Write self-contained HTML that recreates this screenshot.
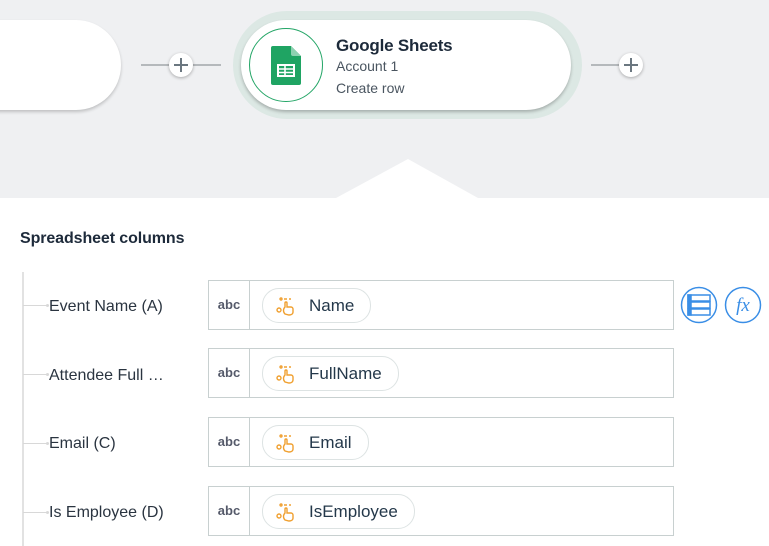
<!DOCTYPE html><html><head><style>
body{margin:0;width:769px;height:546px;overflow:hidden;background:#fff;font-family:"Liberation Sans",Arial,sans-serif;position:relative}
.a{position:absolute}
.plus{position:absolute;width:24px;height:24px;border-radius:50%;background:#fff;box-shadow:0 1px 3px rgba(0,0,0,.3)}
.plus:before{content:"";position:absolute;left:5px;top:11px;width:14px;height:1.5px;background:#6b7780}
.plus:after{content:"";position:absolute;left:11px;top:5px;width:1.5px;height:14px;background:#6b7780}
.row{position:absolute;left:208px;width:464px;height:48px;border:1px solid #c8d0d0;background:#fff}
.abc{position:absolute;left:0;top:0;width:40px;height:48px;border-right:1px solid #c8d0d0;color:#555a6a;font-weight:bold;font-size:13px;line-height:48px;text-align:center}
.chip{position:absolute;left:53px;top:7px;height:33px;border:1px solid #dde3e3;border-radius:17px;font-size:17px;color:#24384a;line-height:33px;padding:0 16px 0 46px}
.chip svg{position:absolute;left:13px;top:7px}
.lbl{position:absolute;left:49px;font-size:16px;color:#2a3440}
.br{position:absolute;left:23px;width:24px;height:1px;background:#d8d8d8}
.br:after{content:"";position:absolute;right:-2px;top:-1px;width:3px;height:3px;border-radius:50%;background:#d8d8d8}
</style></head><body>
<div class="a" style="left:0;top:0;width:769px;height:198px;background:#eff0f2"></div>
<div class="a" style="left:336px;top:159px;width:0;height:0;border-left:72px solid transparent;border-right:70px solid transparent;border-bottom:39px solid #fff"></div>
<div class="a" style="left:-60px;top:20px;width:181px;height:90px;border-radius:45px;background:#fff;box-shadow:0 2px 3px rgba(0,0,0,.2)"></div>
<div class="a" style="left:141px;top:64px;width:80px;height:2px;background:#b5b9bc"></div>
<div class="plus" style="left:169px;top:53px"></div>
<div class="a" style="left:233px;top:11px;width:349px;height:108px;border-radius:54px;background:#dce8e4"></div>
<div class="a" style="left:241px;top:20px;width:330px;height:90px;border-radius:45px;background:#fff;box-shadow:0 2px 3px rgba(0,0,0,.25)"></div>
<div class="a" style="left:249px;top:28px;width:72px;height:72px;border-radius:50%;border:1px solid #23a566"></div>
<svg class="a" style="left:271px;top:46px" width="30" height="39" viewBox="0 0 30 39"><path d="M2 0H20L30 10V37a2 2 0 0 1-2 2H2a2 2 0 0 1-2-2V2a2 2 0 0 1 2-2z" fill="#1fa463"/><path d="M20 0L30 10H22a2 2 0 0 1-2-2z" fill="#8ed1b1"/><rect x="7" y="19" width="16" height="11" fill="none" stroke="#fff" stroke-width="2"/><path d="M7 23H23M7 26.5H23M14 19V30" stroke="#fff" stroke-width="1.6"/></svg>
<div class="a" style="left:336px;top:36px;font-size:17px;font-weight:bold;color:#1d2a3a;letter-spacing:-.2px">Google Sheets</div>
<div class="a" style="left:336px;top:58px;font-size:14px;color:#4a5560">Account 1</div>
<div class="a" style="left:336px;top:80px;font-size:14px;color:#4a5560">Create row</div>
<div class="a" style="left:591px;top:64px;width:30px;height:2px;background:#b5b9bc"></div>
<div class="plus" style="left:619px;top:53px"></div>
<div class="a" style="left:20px;top:230px;font-size:16px;font-weight:bold;color:#1d2a3a;letter-spacing:-.1px">Spreadsheet columns</div>
<div class="a" style="left:22px;top:272px;width:2px;height:274px;background:#e2e2e2"></div>
<div class="br" style="top:305px"></div><div class="lbl" style="top:298px">Event Name (A)</div>
<div class="br" style="top:374px"></div><div class="lbl" style="top:367px">Attendee Full …</div>
<div class="br" style="top:443px"></div><div class="lbl" style="top:435px">Email (C)</div>
<div class="br" style="top:512px"></div><div class="lbl" style="top:504px">Is Employee (D)</div>
<div class="row" style="top:280px"><div class="abc">abc</div><div class="chip"><svg width="20" height="20" viewBox="0 0 20 20" fill="none" stroke="#f0a030" stroke-width="1.4"><circle cx="3" cy="14" r="2"/><circle cx="5" cy="3" r="1"/><path d="M8 3h3M13 3h2"/><path d="M9 18c-2-2-2-5 0-7V7a1 1 0 0 1 2 0v4h4a2 2 0 0 1 2 2v3c0 2-2 3-4 3z"/></svg>Name</div></div>
<div class="row" style="top:348px"><div class="abc">abc</div><div class="chip"><svg width="20" height="20" viewBox="0 0 20 20" fill="none" stroke="#f0a030" stroke-width="1.4"><circle cx="3" cy="14" r="2"/><circle cx="5" cy="3" r="1"/><path d="M8 3h3M13 3h2"/><path d="M9 18c-2-2-2-5 0-7V7a1 1 0 0 1 2 0v4h4a2 2 0 0 1 2 2v3c0 2-2 3-4 3z"/></svg>FullName</div></div>
<div class="row" style="top:417px"><div class="abc">abc</div><div class="chip"><svg width="20" height="20" viewBox="0 0 20 20" fill="none" stroke="#f0a030" stroke-width="1.4"><circle cx="3" cy="14" r="2"/><circle cx="5" cy="3" r="1"/><path d="M8 3h3M13 3h2"/><path d="M9 18c-2-2-2-5 0-7V7a1 1 0 0 1 2 0v4h4a2 2 0 0 1 2 2v3c0 2-2 3-4 3z"/></svg>Email</div></div>
<div class="row" style="top:486px"><div class="abc">abc</div><div class="chip"><svg width="20" height="20" viewBox="0 0 20 20" fill="none" stroke="#f0a030" stroke-width="1.4"><circle cx="3" cy="14" r="2"/><circle cx="5" cy="3" r="1"/><path d="M8 3h3M13 3h2"/><path d="M9 18c-2-2-2-5 0-7V7a1 1 0 0 1 2 0v4h4a2 2 0 0 1 2 2v3c0 2-2 3-4 3z"/></svg>IsEmployee</div></div>
<svg class="a" style="left:680px;top:286px" width="84" height="38" viewBox="0 0 84 38" fill="none" stroke="#3a8ee6" stroke-width="1.5"><circle cx="19" cy="19" r="17.5"/><rect x="8" y="9" width="22" height="6"/><rect x="8" y="16" width="22" height="6"/><rect x="8" y="23" width="22" height="6"/><path d="M8 9h3v20H8z" fill="#3a8ee6"/><circle cx="63" cy="19" r="17.5"/><text x="63" y="25" fill="#3a8ee6" stroke="none" font-family="Liberation Serif,serif" font-style="italic" font-size="19" text-anchor="middle">fx</text></svg>
</body></html>
